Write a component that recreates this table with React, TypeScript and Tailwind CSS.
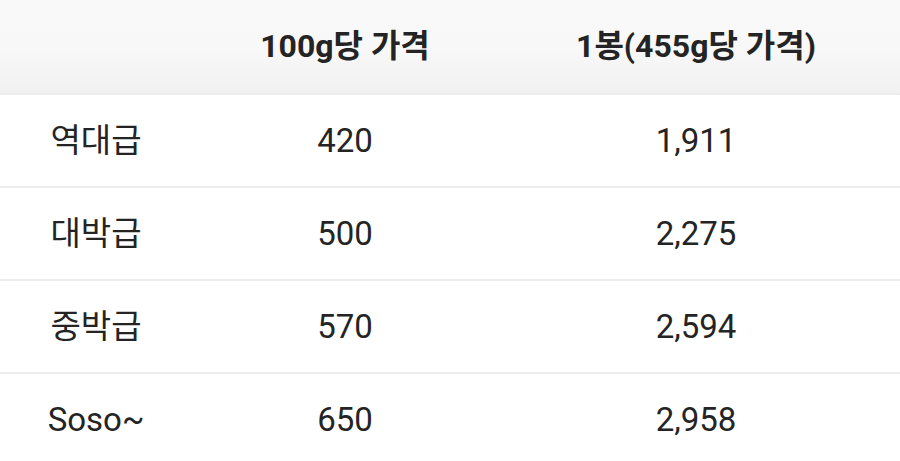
import React from "react";

const rows = [
  ["역대급", "420", "1,911"],
  ["대박급", "500", "2,275"],
  ["중박급", "570", "2,594"],
  ["Soso~", "650", "2,958"],
];

export default function App() {
  return (
    <div
      className="w-[900px] h-[461px] overflow-hidden bg-white text-[#242424]"
      style={{ fontFamily: 'Roboto, "Noto Sans CJK KR", sans-serif' }}
    >
      <div className="flex h-[95px] items-center border-b-2 border-[#ececec] bg-gradient-to-b from-[#f9f9f9] via-[#f8f8f8] to-[#f1f1f1] pb-[2px] text-[32px] font-bold">
        <div className="w-[192px] text-center"></div>
        <div className="w-[306px] text-center">100g당 가격</div>
        <div className="w-[396px] text-center">1봉(455g당 가격)</div>
      </div>
      {rows.map((r, i) => (
        <div
          key={i}
          className="flex h-[93px] items-center border-b-2 border-[#ededed] text-[33px]"
        >
          <div className="w-[192px] text-center">{r[0]}</div>
          <div className="w-[306px] text-center">{r[1]}</div>
          <div className="w-[396px] text-center">{r[2]}</div>
        </div>
      ))}
    </div>
  );
}
